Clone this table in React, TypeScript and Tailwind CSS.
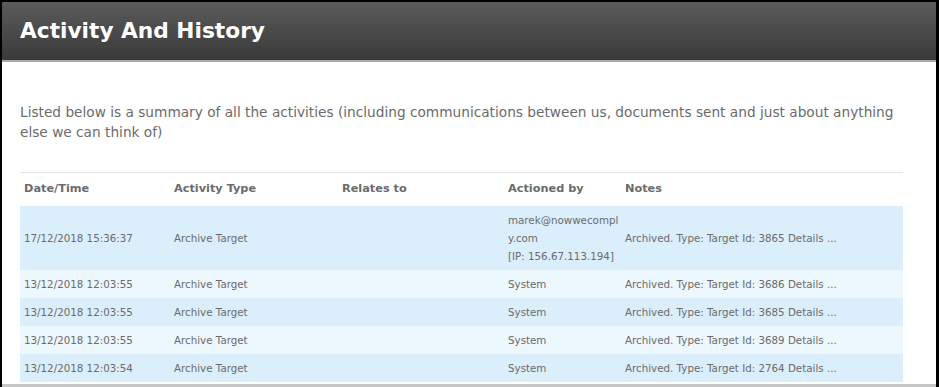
import React from 'react'

const rows = [
  { date: '17/12/2018 15:36:37', type: 'Archive Target', relates: '', by: ['marek@nowwecompl', 'y.com', '[IP: 156.67.113.194]'], notes: 'Archived. Type: Target Id: 3865 Details ...' },
  { date: '13/12/2018 12:03:55', type: 'Archive Target', relates: '', by: ['System'], notes: 'Archived. Type: Target Id: 3686 Details ...' },
  { date: '13/12/2018 12:03:55', type: 'Archive Target', relates: '', by: ['System'], notes: 'Archived. Type: Target Id: 3685 Details ...' },
  { date: '13/12/2018 12:03:55', type: 'Archive Target', relates: '', by: ['System'], notes: 'Archived. Type: Target Id: 3689 Details ...' },
  { date: '13/12/2018 12:03:54', type: 'Archive Target', relates: '', by: ['System'], notes: 'Archived. Type: Target Id: 2764 Details ...' },
]

export default function App() {
  return (
    <div className="w-[939px] h-[387px] bg-black pt-[2px] pl-[2px] pr-[3px] overflow-hidden font-['DejaVu_Sans',sans-serif]">
      <div className="h-[385px] bg-white flex flex-col border-b-[3px] border-[#c6c6c6] overflow-hidden">
        {/* Header bar */}
        <div className="h-[60px] shrink-0 bg-gradient-to-b from-[#5b5b5b] to-[#3a3a3a] border-b-2 border-[#a8a8a8] flex items-center px-[18px]">
          <h1 className="text-white font-bold text-[21.7px] leading-none">Activity And History</h1>
        </div>

        {/* Intro */}
        <p className="mt-[40px] ml-[18px] mr-[22px] text-[13.7px] leading-[20px] text-[#6b6b6b]">
          Listed below is a summary of all the activities (including communications between us, documents sent and just about anything else we can think of)
        </p>

        {/* Table */}
        <table className="mt-[30px] ml-[18px] w-[883px] table-fixed border-collapse border-t border-[#e6e6e6] text-[#6b6b6b]">
          <colgroup>
            <col className="w-[150px]" />
            <col className="w-[168px]" />
            <col className="w-[166px]" />
            <col className="w-[117px]" />
            <col />
          </colgroup>
          <thead>
            <tr className="h-[33px] text-left text-[11.3px] font-bold">
              <th className="pl-[4px] font-bold">Date/Time</th>
              <th className="pl-[4px] font-bold">Activity Type</th>
              <th className="pl-[4px] font-bold">Relates to</th>
              <th className="pl-[4px] font-bold">Actioned by</th>
              <th className="pl-[4px] font-bold">Notes</th>
            </tr>
          </thead>
          <tbody className="text-[10.3px] leading-[18px]">
            {rows.map((r, i) => (
              <tr key={i} className={i % 2 === 0 ? 'bg-[#dbeefc]' : 'bg-[#edf7fe]'}>
                <td className="pl-[4px] py-[5px] align-middle whitespace-nowrap">{r.date}</td>
                <td className="pl-[4px] py-[5px] align-middle">{r.type}</td>
                <td className="pl-[4px] py-[5px] align-middle">{r.relates}</td>
                <td className="pl-[4px] py-[5px] align-middle whitespace-nowrap">
                  {r.by.map((l, j) => (
                    <div key={j}>{l}</div>
                  ))}
                </td>
                <td className="pl-[4px] py-[5px] align-middle whitespace-nowrap">{r.notes}</td>
              </tr>
            ))}
          </tbody>
        </table>
      </div>
    </div>
  )
}
